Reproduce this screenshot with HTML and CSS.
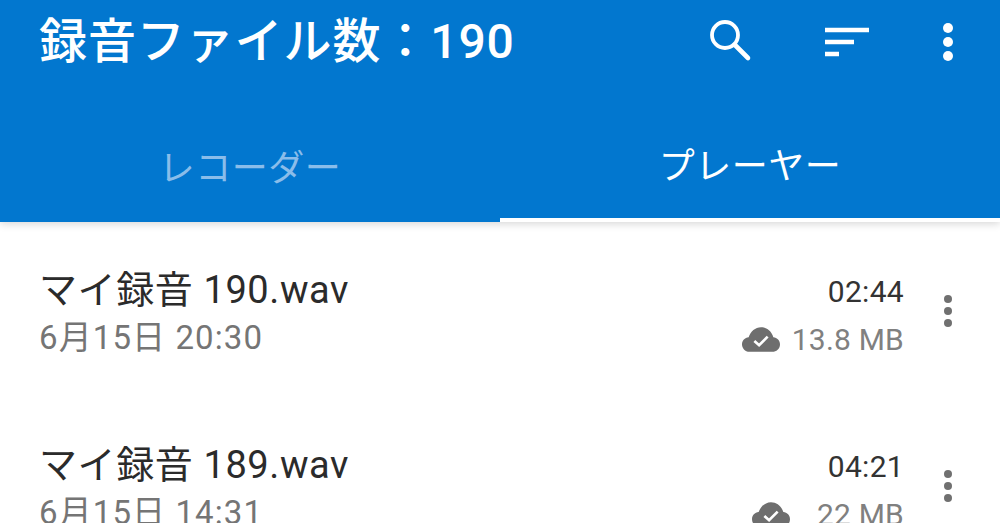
FILE: index.html
```
<!DOCTYPE html>
<html lang="ja">
<head>
<meta charset="utf-8">
<title>録音ファイル</title>
<link rel="stylesheet" href="styles.css">
</head>
<body>
<header class="appbar">
  <div class="toolbar">
    <h1 class="title">録音ファイル数：190</h1>
    <div class="actions">
      <svg class="icon icon-search" viewBox="0 0 44 44"><circle cx="17" cy="17" r="13" fill="none" stroke="#fff" stroke-width="3.8"/><path d="M27 27 L40 40" stroke="#fff" stroke-width="4.6" stroke-linecap="round"/></svg>
      <svg class="icon icon-sort" viewBox="0 0 44 30"><path d="M0 3H44M0 15H29M0 27H14" stroke="#fff" stroke-width="4.6" fill="none"/></svg>
      <svg class="icon icon-more" viewBox="0 0 10 38"><circle cx="5" cy="5" r="5" fill="#fff"/><circle cx="5" cy="19" r="5" fill="#fff"/><circle cx="5" cy="33" r="5" fill="#fff"/></svg>
    </div>
  </div>
  <nav class="tabs">
    <div class="tab">レコーダー</div>
    <div class="tab active">プレーヤー</div>
  </nav>
</header>
<main class="list">
  <article class="row">
    <div class="info">
      <div class="name">マイ録音 190.wav</div>
      <div class="date">6月15日 20:30</div>
    </div>
    <div class="meta">
      <div class="duration">02:44</div>
      <div class="size">
        <svg class="cloud" viewBox="0 0 40 26"><path d="M8 26C3 26 0 22 0 18C0 14 3 11 7 10.500C9 4.500 14 0 20 0C26 0 31 4 33 10.500C37 11 40 14 40 18C40 23 36 26 32 26Z" fill="#6e6e6e"/><path d="M13 14.500L18 19L27 10" stroke="#fff" stroke-width="2.800" fill="none"/></svg>
        <span>13.8 MB</span>
      </div>
    </div>
    <svg class="row-more" viewBox="0 0 8 32"><circle cx="4" cy="4" r="4" fill="#707070"/><circle cx="4" cy="16" r="4" fill="#707070"/><circle cx="4" cy="28" r="4" fill="#707070"/></svg>
  </article>
  <article class="row">
    <div class="info">
      <div class="name">マイ録音 189.wav</div>
      <div class="date">6月15日 14:31</div>
    </div>
    <div class="meta">
      <div class="duration">04:21</div>
      <div class="size size-short">
        <svg class="cloud" viewBox="0 0 40 26"><path d="M8 26C3 26 0 22 0 18C0 14 3 11 7 10.500C9 4.500 14 0 20 0C26 0 31 4 33 10.500C37 11 40 14 40 18C40 23 36 26 32 26Z" fill="#6e6e6e"/><path d="M13 14.500L18 19L27 10" stroke="#fff" stroke-width="2.800" fill="none"/></svg>
        <span>22 MB</span>
      </div>
    </div>
    <svg class="row-more" viewBox="0 0 8 32"><circle cx="4" cy="4" r="4" fill="#707070"/><circle cx="4" cy="16" r="4" fill="#707070"/><circle cx="4" cy="28" r="4" fill="#707070"/></svg>
  </article>
</main>
</body>
</html>
```
FILE: styles.css
```
* { box-sizing: border-box; }
html, body { margin: 0; height: 523px; overflow: hidden; background: #fff; }
body { font-family: Roboto, "Noto Sans CJK JP", sans-serif; }
.appbar { background: #0277cf; height: 222px; box-shadow: 0 2px 8px rgba(0,0,0,.16); position: relative; }
.toolbar { height: 84px; display: flex; align-items: center; justify-content: space-between; padding: 0 47px 0 39px; }
.title { margin: 0; color: #fff; font-size: 48px; font-weight: 500; letter-spacing: .9px; line-height: 86px; white-space: nowrap; }
.actions { display: flex; align-items: center; }
.icon { display: block; }
.icon-search { width: 44px; height: 44px; margin: 0 73px 4px 0; }
.icon-sort { width: 44px; height: 30px; margin-right: 74px; }
.icon-more { width: 10px; height: 38px; }
.tabs { display: flex; height: 138px; }
.tab { flex: 1; display: flex; align-items: center; justify-content: center; padding-top: 24px; color: #8abdea; font-size: 36px; letter-spacing: .5px; }
.tab.active { color: #fff; border-bottom: 4px solid #fff; padding-top: 24px; }
.list { padding: 0 48px 0 39px; }
.row { height: 175px; display: flex; align-items: center; padding-top: 9px; }
.info { flex: 1; }
.name { font-size: 38px; letter-spacing: .6px; line-height: 48px; color: #2b2b2b; }
.date { font-size: 33px; letter-spacing: 1.1px; line-height: 48px; color: #757575; }
.meta { display: flex; flex-direction: column; align-items: flex-end; padding-top: 4px; }
.duration { font-size: 30px; letter-spacing: .3px; line-height: 48px; color: #333; }
.size { display: flex; align-items: center; gap: 12px; font-size: 30px; letter-spacing: .2px; line-height: 48px; color: #808080; }
.size-short { gap: 27px; }
.cloud { width: 38px; height: 25px; display: block; margin-bottom: 2px; }
.row-more { width: 8px; height: 32px; margin: 0 0 6px 40px; display: block; }
```
